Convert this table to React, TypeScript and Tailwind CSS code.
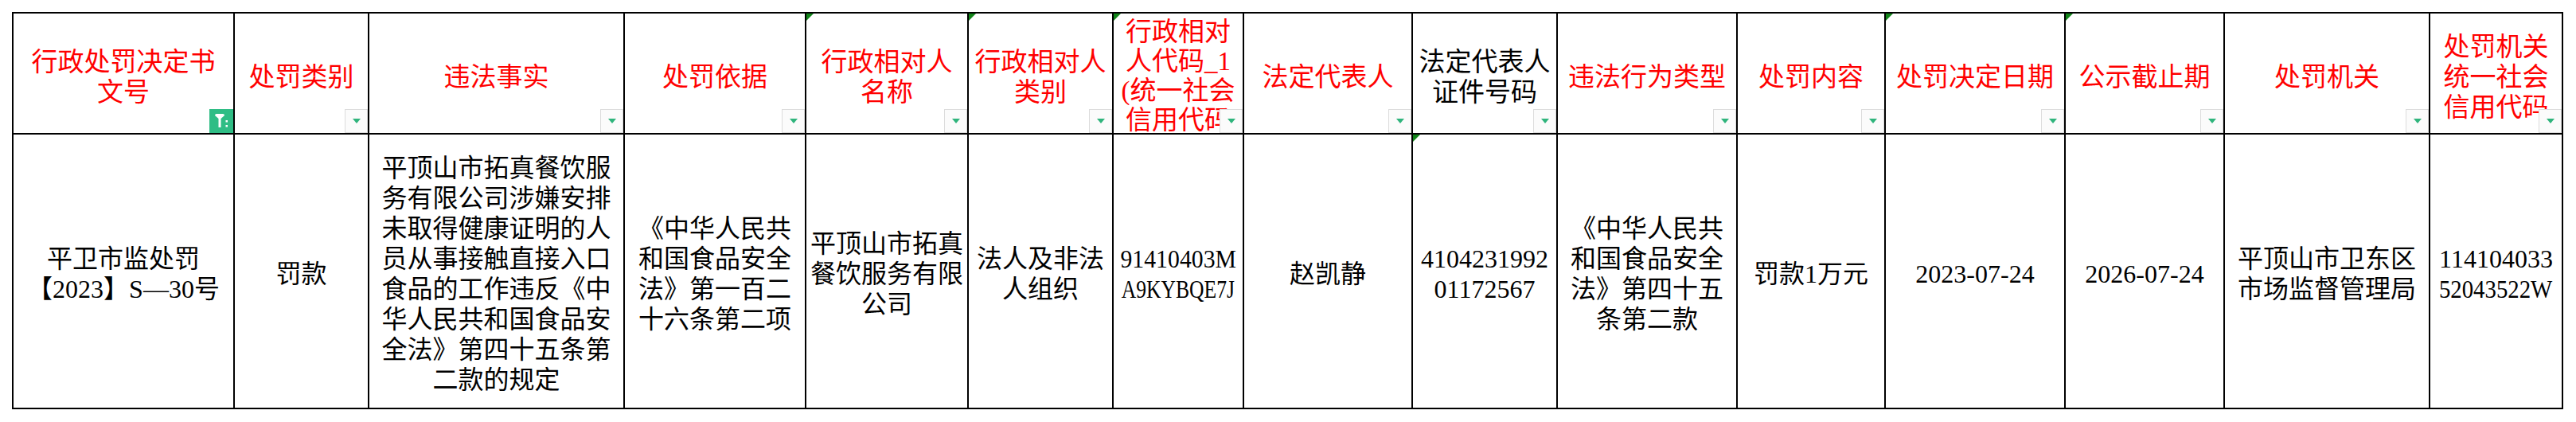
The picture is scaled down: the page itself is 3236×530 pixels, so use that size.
import React from 'react';

type Column = {
  head: string[];
  body: string[];
  headBlack?: boolean;
  headMark?: boolean;
  bodyMark?: boolean;
  filtered?: boolean;
  tall?: boolean;
};

// letters in the codes are much narrower in the sheet font
const squeeze: Record<string, string> = {
  '91410403M': 'scale-x-[0.93]',
  A9KYBQE7J: 'scale-x-[0.8]',
  '52043522W': 'scale-x-[0.9]',
};

const columns: Column[] = [
  { head: ['行政处罚决定书', '文号'], body: ['平卫市监处罚', '【2023】S—30号'], filtered: true },
  { head: ['处罚类别'], body: ['罚款'] },
  {
    head: ['违法事实'],
    body: [
      '平顶山市拓真餐饮服',
      '务有限公司涉嫌安排',
      '未取得健康证明的人',
      '员从事接触直接入口',
      '食品的工作违反《中',
      '华人民共和国食品安',
      '全法》第四十五条第',
      '二款的规定',
    ],
  },
  { head: ['处罚依据'], body: ['《中华人民共', '和国食品安全', '法》第一百二', '十六条第二项'] },
  { head: ['行政相对人', '名称'], body: ['平顶山市拓真', '餐饮服务有限', '公司'], headMark: true },
  { head: ['行政相对人', '类别'], body: ['法人及非法', '人组织'], headMark: true },
  {
    head: ['行政相对', '人代码_1', '(统一社会', '信用代码'],
    body: ['91410403M', 'A9KYBQE7J'],
    headMark: true,
    tall: true,
  },
  { head: ['法定代表人'], body: ['赵凯静'] },
  { head: ['法定代表人', '证件号码'], body: ['4104231992', '01172567'], headBlack: true, bodyMark: true },
  { head: ['违法行为类型'], body: ['《中华人民共', '和国食品安全', '法》第四十五', '条第二款'] },
  { head: ['处罚内容'], body: ['罚款1万元'] },
  { head: ['处罚决定日期'], body: ['2023-07-24'], headMark: true },
  { head: ['公示截止期'], body: ['2026-07-24'], headMark: true },
  { head: ['处罚机关'], body: ['平顶山市卫东区', '市场监督管理局'] },
  { head: ['处罚机关', '统一社会', '信用代码'], body: ['114104033', '52043522W'] },
];

const CornerMark = () => (
  <svg className="absolute left-0 top-0" width="9" height="9" viewBox="0 0 9 9">
    <polygon points="0,0 9,0 0,9" fill="#12851a" />
  </svg>
);

const DropButton = () => (
  <div className="absolute bottom-0 right-0 z-10 flex h-[30px] w-[29px] items-center justify-center border border-[#dcdcdc] bg-[#fbfbfb]">
    <svg width="10" height="6" viewBox="0 0 10 6">
      <polygon points="0,0 10,0 5,6" fill="#2fb47c" />
    </svg>
  </div>
);

const FilterButton = () => (
  <div className="absolute bottom-0 right-0 z-10 flex h-[30px] w-[30px] items-center justify-center bg-[#2fbd85]">
    <svg width="18" height="20" viewBox="0 0 18 20">
      <path d="M1 3 Q1 1 3 1 L11 1 Q13 1 13 3 L8.5 7 L8.5 18 L5.5 18 L5.5 7 Z" fill="#ffffff" />
      <rect x="14.5" y="9" width="2.5" height="2.5" fill="#ffffff" />
      <rect x="14.5" y="15" width="2.5" height="2.5" fill="#ffffff" />
    </svg>
  </div>
);

export default function App() {
  return (
    <div className="h-[530px] w-[3236px] bg-white pl-[15px] pt-[15px] font-['Liberation_Serif','Noto_Sans_CJK_SC',serif]">
      <div className="grid w-max grid-cols-[278px_169px_321px_228px_204px_182px_164px_212px_182px_226px_186px_226px_200px_258px_167px] grid-rows-[152px_345px] border-l-2 border-t-2 border-black">
        {columns.map((col, i) => (
          <div
            key={`h${i}`}
            className={`relative flex flex-col items-center justify-center overflow-hidden border-b-2 border-r-2 border-black text-center text-[33px] ${
              col.tall ? 'pt-[8px] leading-[37px]' : 'pt-[10px] leading-[38px]'
            } ${col.headBlack ? 'text-black' : 'text-[#ff0000]'}`}
          >
            {col.headMark && <CornerMark />}
            {col.head.map((line, j) => (
              <div key={j} className="whitespace-nowrap">
                {line}
              </div>
            ))}
            {col.filtered ? <FilterButton /> : <DropButton />}
          </div>
        ))}
        {columns.map((col, i) => (
          <div
            key={`b${i}`}
            className="relative flex flex-col items-center justify-center border-b-2 border-r-2 border-black pt-[6px] text-center text-[32px] leading-[38px] text-black"
          >
            {col.bodyMark && <CornerMark />}
            {col.body.map((line, j) => (
              <div key={j} className="whitespace-nowrap">
                <span className={`inline-block ${squeeze[line] ?? ''}`}>{line}</span>
              </div>
            ))}
          </div>
        ))}
      </div>
    </div>
  );
}
